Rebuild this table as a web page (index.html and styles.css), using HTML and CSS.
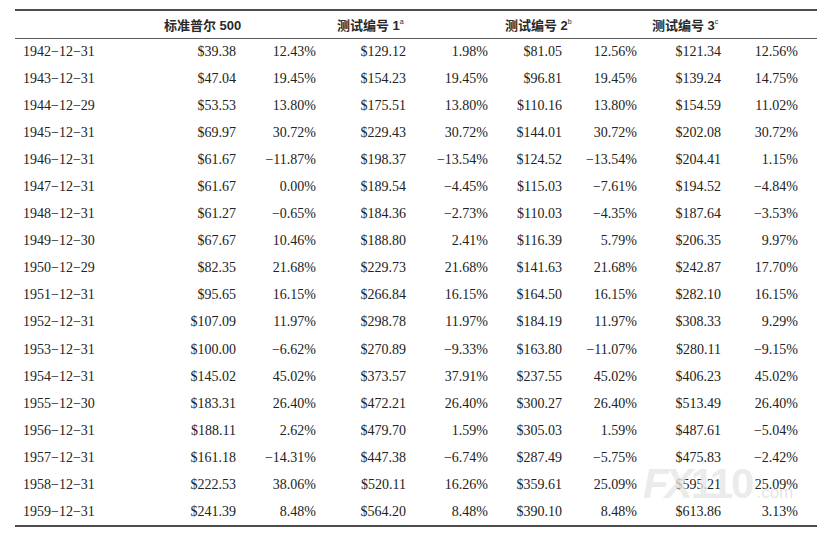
FILE: index.html
```html
<!DOCTYPE html>
<html lang="zh-CN">
<head>
<meta charset="utf-8">
<title>标准普尔 500 与测试编号</title>
<link rel="stylesheet" href="styles.css">
</head>
<body>
<div class="page">
  <table class="data">
    <colgroup>
      <col class="c-date"><col class="c1"><col class="c2"><col class="c3"><col class="c4"><col class="c5"><col class="c6"><col class="c7"><col class="c8"><col class="c-end">
    </colgroup>
    <thead>
      <tr>
        <th></th>
        <th colspan="2" class="h h1">标准普尔 500</th>
        <th colspan="2" class="h h2">测试编号 1<sup>a</sup></th>
        <th colspan="2" class="h h3">测试编号 2<sup>b</sup></th>
        <th colspan="2" class="h h4">测试编号 3<sup>c</sup></th>
        <th></th>
      </tr>
    </thead>
    <tbody>
      <tr><td>1942−12−31</td><td>$39.38</td><td>12.43%</td><td>$129.12</td><td>1.98%</td><td>$81.05</td><td>12.56%</td><td>$121.34</td><td>12.56%</td><td></td></tr>
      <tr><td>1943−12−31</td><td>$47.04</td><td>19.45%</td><td>$154.23</td><td>19.45%</td><td>$96.81</td><td>19.45%</td><td>$139.24</td><td>14.75%</td><td></td></tr>
      <tr><td>1944−12−29</td><td>$53.53</td><td>13.80%</td><td>$175.51</td><td>13.80%</td><td>$110.16</td><td>13.80%</td><td>$154.59</td><td>11.02%</td><td></td></tr>
      <tr><td>1945−12−31</td><td>$69.97</td><td>30.72%</td><td>$229.43</td><td>30.72%</td><td>$144.01</td><td>30.72%</td><td>$202.08</td><td>30.72%</td><td></td></tr>
      <tr><td>1946−12−31</td><td>$61.67</td><td>−11.87%</td><td>$198.37</td><td>−13.54%</td><td>$124.52</td><td>−13.54%</td><td>$204.41</td><td>1.15%</td><td></td></tr>
      <tr><td>1947−12−31</td><td>$61.67</td><td>0.00%</td><td>$189.54</td><td>−4.45%</td><td>$115.03</td><td>−7.61%</td><td>$194.52</td><td>−4.84%</td><td></td></tr>
      <tr><td>1948−12−31</td><td>$61.27</td><td>−0.65%</td><td>$184.36</td><td>−2.73%</td><td>$110.03</td><td>−4.35%</td><td>$187.64</td><td>−3.53%</td><td></td></tr>
      <tr><td>1949−12−30</td><td>$67.67</td><td>10.46%</td><td>$188.80</td><td>2.41%</td><td>$116.39</td><td>5.79%</td><td>$206.35</td><td>9.97%</td><td></td></tr>
      <tr><td>1950−12−29</td><td>$82.35</td><td>21.68%</td><td>$229.73</td><td>21.68%</td><td>$141.63</td><td>21.68%</td><td>$242.87</td><td>17.70%</td><td></td></tr>
      <tr><td>1951−12−31</td><td>$95.65</td><td>16.15%</td><td>$266.84</td><td>16.15%</td><td>$164.50</td><td>16.15%</td><td>$282.10</td><td>16.15%</td><td></td></tr>
      <tr><td>1952−12−31</td><td>$107.09</td><td>11.97%</td><td>$298.78</td><td>11.97%</td><td>$184.19</td><td>11.97%</td><td>$308.33</td><td>9.29%</td><td></td></tr>
      <tr><td>1953−12−31</td><td>$100.00</td><td>−6.62%</td><td>$270.89</td><td>−9.33%</td><td>$163.80</td><td>−11.07%</td><td>$280.11</td><td>−9.15%</td><td></td></tr>
      <tr><td>1954−12−31</td><td>$145.02</td><td>45.02%</td><td>$373.57</td><td>37.91%</td><td>$237.55</td><td>45.02%</td><td>$406.23</td><td>45.02%</td><td></td></tr>
      <tr><td>1955−12−30</td><td>$183.31</td><td>26.40%</td><td>$472.21</td><td>26.40%</td><td>$300.27</td><td>26.40%</td><td>$513.49</td><td>26.40%</td><td></td></tr>
      <tr><td>1956−12−31</td><td>$188.11</td><td>2.62%</td><td>$479.70</td><td>1.59%</td><td>$305.03</td><td>1.59%</td><td>$487.61</td><td>−5.04%</td><td></td></tr>
      <tr><td>1957−12−31</td><td>$161.18</td><td>−14.31%</td><td>$447.38</td><td>−6.74%</td><td>$287.49</td><td>−5.75%</td><td>$475.83</td><td>−2.42%</td><td></td></tr>
      <tr><td>1958−12−31</td><td>$222.53</td><td>38.06%</td><td>$520.11</td><td>16.26%</td><td>$359.61</td><td>25.09%</td><td>$595.21</td><td>25.09%</td><td></td></tr>
      <tr><td>1959−12−31</td><td>$241.39</td><td>8.48%</td><td>$564.20</td><td>8.48%</td><td>$390.10</td><td>8.48%</td><td>$613.86</td><td>3.13%</td><td></td></tr>
    </tbody>
  </table>
  <div class="watermark"><span class="wm-fx">FX</span><span class="wm-num">110</span><span class="wm-small">.com</span></div>
</div>
</body>
</html>
```

FILE: styles.css
```css
html, body {
  margin: 0;
  padding: 0;
  background: #ffffff;
}

.page {
  position: relative;
  padding: 9px 8px 0 15px;
}

.data {
  width: 802px;
  border-collapse: collapse;
  table-layout: fixed;
  font-family: "Liberation Serif", "Times New Roman", serif;
  font-size: 14px;
  color: #222222;
  border-top: 2px solid #4d4d4d;
  border-bottom: 2px solid #4d4d4d;
}

.c-date { width: 135px; }
.c1 { width: 86px; }
.c2 { width: 80px; }
.c3 { width: 90px; }
.c4 { width: 82px; }
.c5 { width: 74px; }
.c6 { width: 75px; }
.c7 { width: 84px; }
.c8 { width: 77px; }
.c-end { width: 19px; }

.data thead tr {
  height: 28px;
  border-bottom: 1px solid #5a5a5a;
}

.data th {
  padding: 0;
  text-align: left;
  font-family: "Liberation Sans", "Noto Sans CJK SC", sans-serif;
  font-size: 13px;
  font-weight: bold;
  color: #2a2a2a;
  white-space: nowrap;
  vertical-align: middle;
}

.data th sup {
  font-size: 7px;
  font-weight: normal;
  vertical-align: 6px;
  line-height: 0;
}

.data th.h1 { padding-left: 14px; }
.data th.h2 { padding-left: 21px; }
.data th.h3 { padding-left: 17px; }
.data th.h4 { padding-left: 15px; }

.data tbody tr {
  height: 27.1px;
}

.data td {
  padding: 0;
  text-align: right;
  white-space: nowrap;
  vertical-align: middle;
  line-height: 16px;
}

.data td:first-child {
  text-align: left;
  padding-left: 8px;
}

.watermark {
  position: absolute;
  left: 643px;
  top: 463px;
  display: flex;
  align-items: baseline;
  font-family: "Liberation Sans", "DejaVu Sans", sans-serif;
  font-weight: bold;
  color: rgba(230, 230, 230, 0.8);
  pointer-events: none;
}

.wm-fx {
  font-size: 42px;
  font-style: italic;
  letter-spacing: -4px;
  line-height: 42px;
}

.wm-num {
  font-size: 42px;
  letter-spacing: -2px;
  line-height: 42px;
  margin-left: 2px;
}

.wm-small {
  font-size: 17px;
  font-weight: normal;
  margin-left: 4px;
  color: rgba(222, 222, 222, 0.8);
}
```
